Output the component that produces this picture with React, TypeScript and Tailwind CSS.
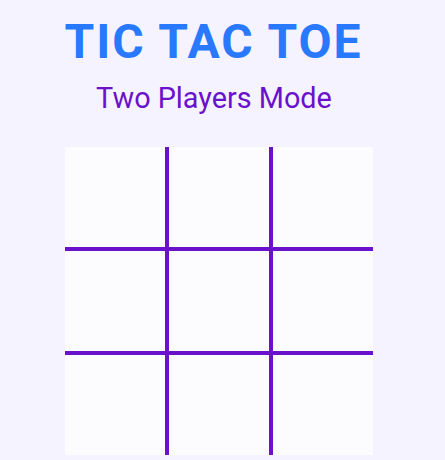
export default function App() {
  const cells = Array.from({ length: 9 })

  return (
    <div className="min-h-screen bg-[#f5f3ff] flex flex-col items-center pt-[14px]" style={{ fontFamily: 'Roboto, "Liberation Sans", sans-serif' }}>
      <h1 className="text-[48px] leading-[56px] font-bold tracking-[2px] text-[#2979ff] pr-[18px]">TIC TAC TOE</h1>
      <p className="mt-[12px] text-[28.8px] leading-[32px] text-[#6a11cb] pr-[17px]">Two Players Mode</p>
      <div className="mt-[33px] mr-[7px] grid grid-cols-[100px_100px_100px] grid-rows-[100px_100px_100px] gap-[4px] bg-[#6a11cb]">
        {cells.map((_, i) => (
          <div key={i} className="bg-[#fcfcff]" />
        ))}
      </div>
    </div>
  )
}
